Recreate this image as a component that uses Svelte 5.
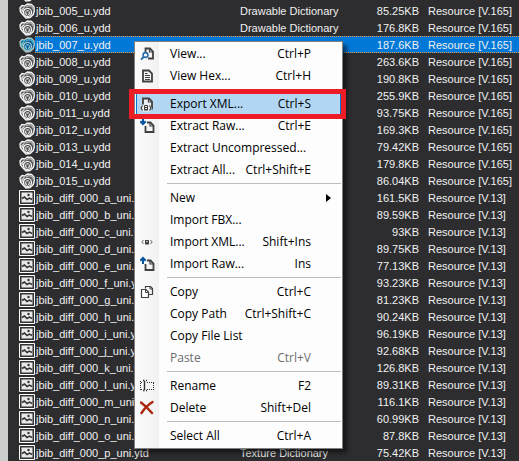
<script>
  const geo = [
    ['005', '85.25'], ['006', '176.8'], ['007', '187.6'], ['008', '263.6'],
    ['009', '190.8'], ['010', '255.9'], ['011', '93.75'], ['012', '169.3'],
    ['013', '79.42'], ['014', '179.8'], ['015', '86.04']
  ].map(([n, s]) => ({ name: `jbib_${n}_u.ydd`, type: 'Drawable Dictionary', size: `${s}KB`, info: 'Resource [V.165]', mesh: true, selected: n === '007' }));
  const sizes = ['161.5', '89.59', '93', '89.75', '77.13', '93.23', '81.23', '90.24', '96.19', '92.68', '126.8', '89.31', '116.1', '60.99', '87.8', '75.42'];
  const tex = sizes.map((s, i) => ({ name: `jbib_diff_000_${'abcdefghijklmnop'[i]}_uni.ytd`, type: 'Texture Dictionary', size: `${s}KB`, info: 'Resource [V.13]', mesh: false, selected: false }));
  const files = [...geo, ...tex];

  const groups = [
    [
      { label: 'View...', key: 'Ctrl+P', icon: 'view' },
      { label: 'View Hex...', key: 'Ctrl+H', icon: 'hex' }
    ],
    [
      { label: 'Export XML...', key: 'Ctrl+S', icon: 'export', active: true },
      { label: 'Extract Raw...', key: 'Ctrl+E', icon: 'extract' },
      { label: 'Extract Uncompressed...' },
      { label: 'Extract All...', key: 'Ctrl+Shift+E' }
    ],
    [
      { label: 'New', sub: true },
      { label: 'Import FBX...' },
      { label: 'Import XML...', key: 'Shift+Ins', icon: 'xml' },
      { label: 'Import Raw...', key: 'Ins', icon: 'import' }
    ],
    [
      { label: 'Copy', key: 'Ctrl+C', icon: 'copy' },
      { label: 'Copy Path', key: 'Ctrl+Shift+C' },
      { label: 'Copy File List' },
      { label: 'Paste', key: 'Ctrl+V', disabled: true }
    ],
    [
      { label: 'Rename', key: 'F2', icon: 'rename' },
      { label: 'Delete', key: 'Shift+Del', icon: 'delete' }
    ],
    [{ label: 'Select All', key: 'Ctrl+A' }]
  ];
</script>

{#snippet glyph(kind)}
  <svg class="glyph" viewBox="0 0 16 16" aria-hidden="true">
    {#if kind === 'view'}
      <path d="M5.500 6V2.500H10L13 5.500V12.500H8" fill="#f4f4f4" stroke="#404040" stroke-width="1.800" />
      <path d="M9.500 2.500V6H13" fill="none" stroke="#404040" stroke-width="1.200" />
      <circle cx="5.500" cy="9" r="2.400" fill="#fff" stroke="#2b6cab" stroke-width="1.600" />
      <path d="M3.800 10.800L1 13.600" stroke="#2b6cab" stroke-width="2" />
    {:else if kind === 'hex'}
      <path d="M3 2.500h6L12 5.500V13.500H3z" fill="#f4f4f4" stroke="#404040" stroke-width="1.800" />
      <path d="M5 5.500h2.500M5 7.500h5M5 9.500h5M5 11.500h5" stroke="#404040" />
    {:else if kind === 'export'}
      <path d="M3 9V2.500h6l3 3V13.500" fill="#e9eff5" stroke="#404040" stroke-width="1.800" />
      <path d="M8.500 2.500V6H12" fill="none" stroke="#404040" stroke-width="1.200" />
      <path d="M0 12l2.500-3.500h7L12 12l-2.500 3.500h-7z" fill="#eee" />
      <path d="M2.500 9.500L1 12l1.500 2.500M9.500 9.500L11 12l-1.500 2.500" fill="none" stroke="#404040" stroke-width="1.200" />
      <path d="M4 11h4v3.500H4z" fill="#404040" />
      <path d="M4.500 11V9.500h3V11" fill="none" stroke="#404040" />
      <path d="M5 12.500h2" stroke="#ddd" />
    {:else if kind === 'extract' || kind === 'import'}
      <path d="M7 4.500h3.500L13.500 7.500V14H5.500V8" fill="#f4f4f4" stroke="#404040" stroke-width="1.800" />
      <path d="M10 4.500V8h3.500" fill="none" stroke="#404040" stroke-width="1.200" />
      {#if kind === 'extract'}
        <path d="M3 0v6M.3 3.300L3 6l2.700-2.700" fill="none" stroke="#0754a0" stroke-width="2" />
      {:else}
        <path d="M3 8V2M.3 4.700L3 2l2.700 2.700" fill="none" stroke="#0754a0" stroke-width="2" />
      {/if}
    {:else if kind === 'xml'}
      <path d="M3.500 6L2 8l1.500 2M10.500 6L12 8l-1.500 2" fill="none" stroke="#888" stroke-width="1.200" />
      <path d="M5 6h4v4.500H5z" fill="#444" />
      <path d="M6 7.500h2" stroke="#bbb" />
    {:else if kind === 'copy'}
      <path d="M5.500 4.500V2.500h5l2 2V10.500H9" fill="none" stroke="#404040" stroke-width="1.200" />
      <path d="M1.500 5.500h4.500l2.500 2.500v5.500h-7z" fill="#fff" stroke="#404040" stroke-width="1.200" />
      <path d="M5.500 5.500V8.500H8.500M10 2.500V5h2.500" fill="none" stroke="#404040" />
    {:else if kind === 'rename'}
      <path d="M3 2.500h1.500M6 2.500H7M3 12.500h1.500M6 12.500H7M4.500 3v9" fill="none" stroke="#333" stroke-width="1.400" />
      <path d="M.5 3v10M1 4.500h2M1 11.500h2" stroke="#333" stroke-dasharray="1 1" />
      <path d="M7 4.500h7M7 11.500h7M13.500 5v7" stroke="#333" stroke-dasharray="1 1" />
    {:else if kind === 'delete'}
      <path d="M1 2.500Q7 7 12 13M12.500 2Q6 6 1.500 13" fill="none" stroke="#a9280f" stroke-width="2.400" stroke-linecap="round" />
    {/if}
  </svg>
{/snippet}

{#snippet fileIcon(mesh)}
  <svg class="file-icon" viewBox="0 0 16 16" aria-hidden="true">
    {#if mesh}
      <path d="M1 5l2-2.500L5.500 3 8.500 1l4 .5L15 4l.3 4-1 3.500L11 14.500l-4 .5-3-3L1.500 9z" fill="#555" stroke="#f4f4f4" stroke-width="1.400" />
      <path d="M7 4l3-1.500 3 1 1 2.500" fill="none" stroke="#aaa" stroke-width="1.600" />
      <path d="M2 7.500L5.500 4.500M2.500 9L5 7" fill="none" stroke="#ddd" stroke-width="1.200" />
      <circle cx="8.500" cy="9.500" r="4" fill="#444" stroke="#fff" stroke-width="1.200" />
      <path d="M6.300 8.500l2.200-1 2.200 1v2.500l-2.200 1.200L6.300 11z" fill="#999" stroke="#eee" stroke-width=".9" />
      <path d="M6.500 8.500l2 1 2-1M8.500 9.500V12" fill="none" stroke="#333" stroke-width=".7" />
    {:else}
      <path d="M.5 .5h15v14H.5z" fill="#333" stroke="#fff" />
      <path d="M2.500 2.500h11v10h-11z" fill="#e8e8e8" />
      <path d="M3 8.500l2.500-1.500L8 9.500l2.500-1.500L13 9.500" fill="none" stroke="#333" stroke-width="1.500" />
      <circle cx="9.500" cy="5" r="1.200" fill="#333" />
    {/if}
  </svg>
{/snippet}

<main class="browser">
  <div class="scrolled">{@render fileIcon(true)}</div>
  <table class="files">
    <colgroup><col class="c-name" /><col class="c-type" /><col class="c-size" /><col /></colgroup>
    <tbody>
      {#each files as file}
        <tr class:selected={file.selected}>
          <td><span class="name">{@render fileIcon(file.mesh)}<span class="text">{file.name}</span></span></td>
          <td>{file.type}</td>
          <td class="size">{file.size}</td>
          <td class="info">{file.info}</td>
        </tr>
      {/each}
    </tbody>
  </table>

  <div class="menu" role="menu">
    {#each groups as group}
      <div class="group" role="group">
        {#each group as item}
          <button type="button" role="menuitem" class="item" class:active={item.active} disabled={item.disabled}>
            <span class="slot">{#if item.icon}{@render glyph(item.icon)}{/if}</span>
            <span class="label">{item.label}</span>
            {#if item.key}<span class="key">{item.key}</span>{/if}
            {#if item.sub}<svg class="arrow" viewBox="0 0 5 8" aria-hidden="true"><path d="M0 0l5 4-5 4z" /></svg>{/if}
          </button>
        {/each}
      </div>
    {/each}
  </div>
</main>

<style>
  :global(body) { margin: 0; background: #2d2d30; }
  .browser {
    position: relative;
    box-sizing: border-box;
    border-left: 8px solid #cdcdcd;
    background: #2d2d30;
    overflow: hidden;
    font: 11px/15px "Liberation Sans", Arial, sans-serif;
    color: #f1f1f1;
  }
  .scrolled { display: flex; align-items: flex-end; height: 2px; padding-left: 11px; overflow: hidden; }
  .files { width: 100%; border-collapse: collapse; table-layout: fixed; }
  .c-name { width: 232px; }
  .c-type { width: 110px; }
  .c-size { width: 72px; }
  tr { height: 17px; }
  td { padding: 2px 0 0; white-space: nowrap; overflow: hidden; }
  .name { display: flex; height: 15px; margin-top: -2px; padding: 2px 0 0 11px; }
  .text { flex: 1; margin-top: -2px; padding: 2px 0 0 1px; }
  .file-icon { width: 16px; height: 16px; margin-top: -1px; flex: none; }
  .size { text-align: right; padding-right: 3px; }
  .info { padding-left: 6px; }
  .selected td:not(:first-child), .selected .text {
    background:
      repeating-linear-gradient(90deg, #e8963c 0 1px, #0078d7 1px 2px) top / 100% 1px no-repeat,
      repeating-linear-gradient(90deg, #e8963c 0 1px, #0078d7 1px 2px) bottom / 100% 1px no-repeat,
      #0078d7;
  }
  .selected .file-icon { filter: sepia(1) hue-rotate(170deg) saturate(4) brightness(0.75); }
  .menu {
    position: absolute;
    left: 126px;
    top: 41px;
    box-sizing: border-box;
    width: 209px;
    padding: 1px;
    border: 1px solid #808080;
    background: linear-gradient(90deg, #fcfcfc, #f1f1f1 24px, #fdfdfd 24px);
    box-shadow: 4px 4px 4px rgba(0, 0, 0, 0.5);
  }
  .group + .group { padding-top: 6px; background: linear-gradient(#bdbdbd, #bdbdbd) 31px 2px / 100% 1px no-repeat; }
  .item {
    position: relative;
    display: flex;
    align-items: center;
    box-sizing: border-box;
    width: 100%;
    height: 22px;
    padding: 0 30px 0 4px;
    border: 0;
    background: none;
    color: #000;
    font: 12px/22px "Open Sans", "Noto Sans", sans-serif;
    text-align: left;
    white-space: nowrap;
  }
  .item:disabled { color: #6d6d6d; }
  .slot { width: 30px; height: 16px; flex: none; }
  .glyph { display: block; width: 16px; height: 16px; }
  .label { flex: 1; }
  .arrow { width: 5px; height: 8px; margin-right: -20px; }
  .active { z-index: 1; background: #b3d7f3; box-shadow: inset 1px 0 #0078d7, inset -1px 0 #0078d7; }
  .active::after { content: ""; position: absolute; inset: -4px -5px -4px -7px; border: 5px solid #ee1c24; }
</style>
